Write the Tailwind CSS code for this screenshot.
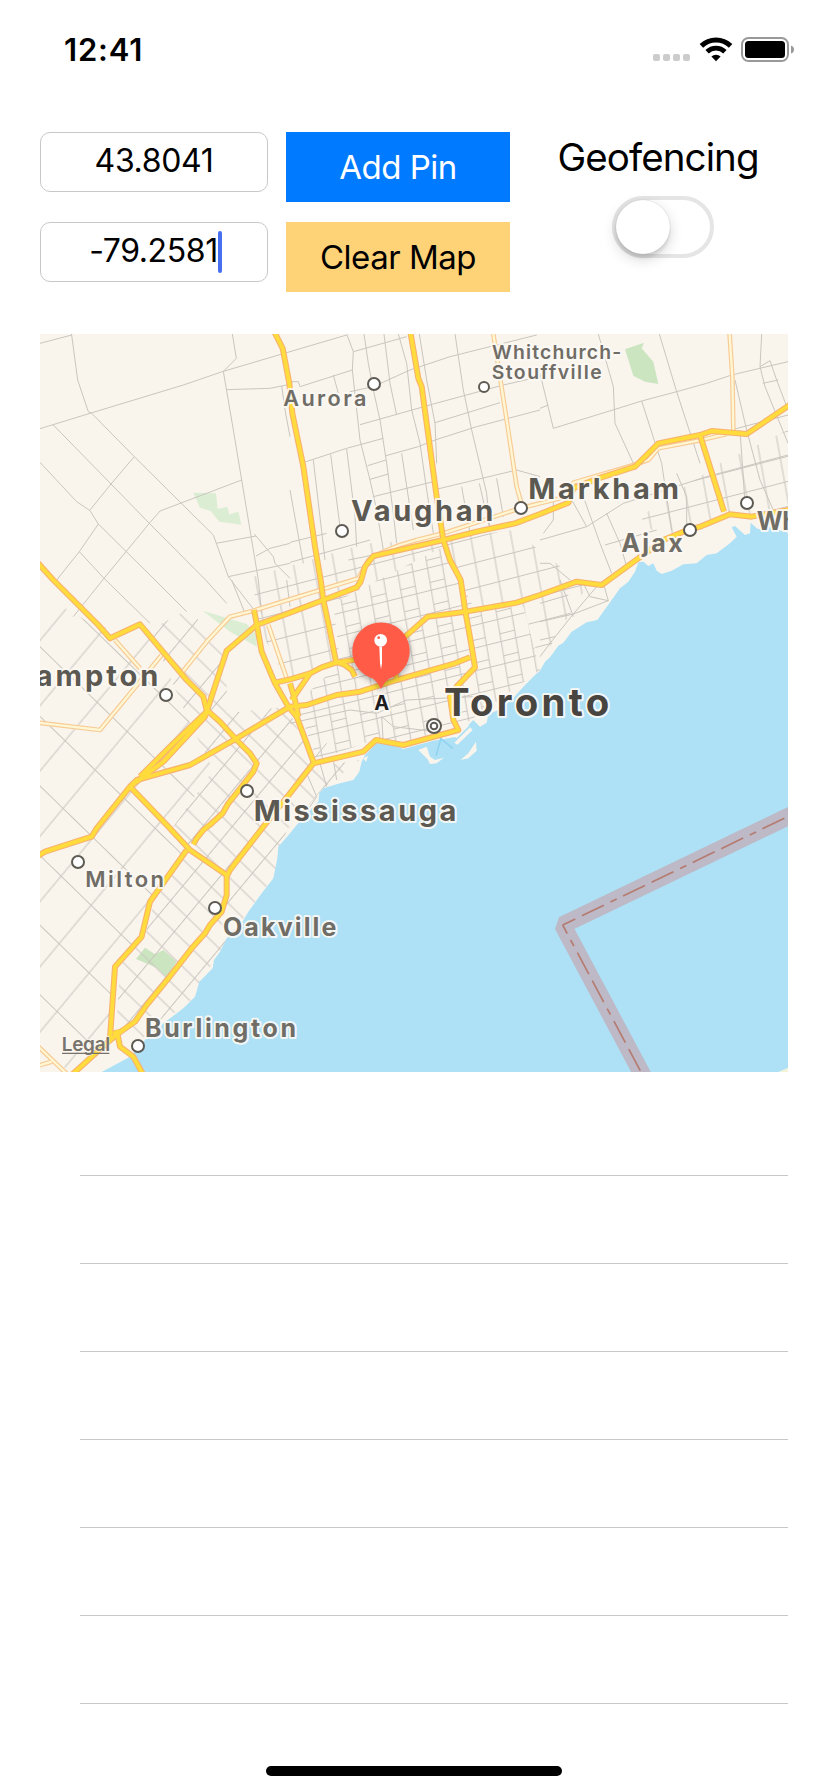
<!DOCTYPE html>
<html lang="en">
<head>
<meta charset="utf-8">
<title>Geofencing</title>
<script src="https://cdn.jsdelivr.net/npm/@tailwindcss/browser@4"></script>
</head>
<body class="bg-white">
<main class="flex h-[1792px] w-[828px] flex-col overflow-hidden bg-white font-['Inter','Liberation_Sans',sans-serif] text-black">
  <header class="flex h-[132px] items-start justify-between pt-[37px] pr-[34px] pl-[64px]">
    <span class="text-[31px] leading-[26px] font-semibold tracking-[0.8px]">12:41</span>
    <div class="flex h-[25px] items-start">
      <div class="mt-[17px] mr-[9px] flex gap-[3px]">
        <i class="h-[7px] w-[7px] rounded-[2px] bg-[#cccccc]"></i><i class="h-[7px] w-[7px] rounded-[2px] bg-[#cccccc]"></i><i class="h-[7px] w-[7px] rounded-[2px] bg-[#cccccc]"></i><i class="h-[7px] w-[7px] rounded-[2px] bg-[#cccccc]"></i>
      </div>
      <svg class="mr-[8px] h-[25px] w-[34px]" viewBox="0 0 34 25" fill="none" stroke="#000">
        <path d="M2.4 8.9A21 21 0 0 1 31.6 8.9" stroke-width="5"/>
        <path d="M8.1 14.8A12.8 12.8 0 0 1 25.9 14.8" stroke-width="4.8"/>
        <path d="M17 24.3L12.4 19.5A6.6 6.6 0 0 1 21.6 19.5Z" fill="#000" stroke="none"/>
      </svg>
      <svg class="h-[25px] w-[53px]" viewBox="0 0 53 25">
        <rect x="1" y="1" width="46" height="23" rx="6.5" fill="none" stroke="#999" stroke-width="2"/>
        <rect x="4" y="4" width="40" height="17" rx="3.5"/>
        <path d="M50 8.5q3 1 3 4t-3 4z" fill="#999"/>
      </svg>
    </div>
  </header>

  <section class="flex h-[202px] items-start pl-[40px]">
    <div class="flex w-[228px] flex-col gap-[30px]">
      <div class="flex h-[60px] items-center justify-center rounded-[10px] border border-[#c8c8c8] pb-[2px] text-[32px] tracking-[-0.35px]">43.8041</div>
      <div class="flex h-[60px] items-center justify-center rounded-[10px] border border-[#c8c8c8] pb-[1px] pl-[3px] text-[32px] tracking-[-0.4px]"><span class="-mt-[1px]">-79.2581</span><span class="h-[42px] w-[4px] rounded-full bg-[#476ff0]"></span></div>
    </div>
    <div class="ml-[18px] flex w-[224px] flex-col gap-[20px] text-[33px] tracking-[-0.5px]">
      <button class="h-[70px] bg-[#007aff] pt-[2px] text-white">Add Pin</button>
      <button class="h-[70px] bg-[#fed377] pt-[2px]">Clear Map</button>
    </div>
    <div class="ml-[34px] flex w-[228px] flex-col items-center">
      <span class="h-[48px] pt-[1px] text-[38.5px] leading-[48px] tracking-[-0.9px]">Geofencing</span>
      <div class="mt-[16px] ml-[10px] h-[62px] w-[102px] rounded-full border-4 border-[#e5e5e5] bg-white">
        <div class="h-[54px] w-[54px] rounded-full bg-white shadow-[0_5px_14px_rgba(0,0,0,0.17),0_4px_3px_rgba(0,0,0,0.08),0_0_1px_rgba(0,0,0,0.25)]"></div>
      </div>
    </div>
  </section>

  <section class="ml-[40px] h-[738px] w-[748px] shrink-0">
    <svg class="block h-[738px] w-[748px]" viewBox="0 12 2244 2214">
      <defs>
        <pattern id="city" width="88" height="66" patternUnits="userSpaceOnUse" patternTransform="matrix(1 -.25 .17 1 10 5)"><path d="M0 33H88M22 0V66M66 0V66M22 10H66" fill="none" stroke="#c9c6bf" stroke-width="3"/></pattern>
        <pattern id="suburb" width="58" height="72" patternUnits="userSpaceOnUse" patternTransform="matrix(1 -.26 .18 1 0 20)"><path d="M0 36H58M29 0V72" fill="none" stroke="#c9c6bf" stroke-width="3"/></pattern>
        <pattern id="west" width="68" height="58" patternUnits="userSpaceOnUse" patternTransform="matrix(.72 .7 -.64 .77 0 0)"><path d="M0 29H68M34 0V58" fill="none" stroke="#c9c6bf" stroke-width="3"/></pattern>
        <pattern id="rural" width="125" height="150" patternUnits="userSpaceOnUse" patternTransform="matrix(.72 .7 -.64 .77 20 30)"><path d="M0 75H125M60 0V150" fill="none" stroke="#c9c6bf" stroke-width="3"/></pattern>
        <g id="major">
          <path d="M700 0L728 55L748 160L757 250L790 410L825 650L842 750L850 810L865 880L888 995L915 1005L935 1020L945 1040"/>
          <path d="M1110 0L1135 145L1145 170L1190 500L1210 630L1230 690L1262 750L1277 850L1295 950L1305 1012L1250 1070L1230 1100L1240 1170L1255 1200L1090 1245L1008 1230L970 1265L820 1300L750 1390L670 1490L570 1620L560 1640L560 1695L545 1745L510 1785L495 1810L455 1855L385 1945L320 2025L285 2075L235 2110L205 2135L95 2235"/>
          <path d="M230 2100L240 2150L280 2180L310 2235M218 2110L245 2105"/>
          <path d="M2250 224L2120 312L2015 303L1980 315L1855 340L1785 410L1675 445L1600 475L1585 518L1500 552L1425 580L1310 605L1210 630L1000 678L975 710L962 755L950 772L850 810L750 848L650 885L560 962L500 1145L495 1160L370 1295L270 1370L170 1495L155 1520L15 1565L-10 1580"/>
          <path d="M500 1145L400 1240L300 1340"/>
          <path d="M2250 539L2135 560L2070 553L1980 590L1930 605L1870 630L1795 685L1685 765L1610 755L1500 795L1430 818L1277 845L1163 860L1090 925L1010 980L940 990L888 998L845 1012L810 1030L750 1048L705 1058"/>
          <path d="M1290 982L1245 1000L1070 1050L960 1085L890 1095L800 1125L750 1130L585 1228L450 1305L290 1350L270 1370"/>
          <path d="M1065 1020L1070 1050M810 1030L755 1110"/>
          <path d="M642 840L650 880L665 965L705 1060L745 1130L770 1160L800 1240L820 1295M750 1060L765 1110L775 1160"/>
          <path d="M-10 695L40 750L175 885L210 925L300 883L440 1050L490 1100L500 1140L540 1175L590 1230L630 1270L650 1300L640 1325L605 1370L565 1420L548 1450L515 1480L490 1500L470 1525L460 1543"/>
          <path d="M270 1370L385 1490L450 1560L560 1635"/>
          <path d="M440 1560L330 1715L305 1820L225 1910L210 2125"/>
          <path d="M1980 315L2052 545"/>
        </g>
        <g id="minor">
          <path d="M1358 0L1400 270L1430 470L1447 530"/>
          <path d="M2060 312L1975 332L1855 355L1825 390L1780 405L1600 458L1560 505L1500 520L1440 535L1210 610L1130 630L1080 645L1030 665L985 690L955 745L750 808L640 842L570 860L500 935L420 1035"/>
          <path d="M2068 0L2077 140L2080 300"/>
          <path d="M685 885L740 1045M225 930L300 1015M365 975L180 1200L-5 1178"/>
          <path d="M-5 2150L85 2236M-5 2207L35 2195"/>
        </g>
      </defs>

      <rect y="12" width="2244" height="2214" fill="#f9f5ed"/>
      <g fill="#dbedd2">
        <path d="M460 488L528 490L533 537L562 530L568 553L595 545L604 584L538 575L512 543L480 533Z"/>
        <path d="M488 842L620 882L650 915L650 950L570 905Z"/>
      </g>
      <g fill="#cbe5c0">
        <path d="M1755 58L1812 38L1805 55L1840 95L1855 162L1815 155L1780 137Z"/>
        <path d="M315 1853L345 1873L370 1860L410 1895L380 1943L350 1913L288 1887Z"/>
      </g>

      <g stroke="none">
        <path fill="url(#city)" d="M880 820L1210 650L1300 830L1450 830L1500 1020L1250 1200L1090 1245L1000 1230L830 1290L770 1120L900 1000Z"/>
        <path fill="url(#suburb)" d="M640 740L980 640L1200 630L1420 600L1640 770L1500 1000L1450 830L1300 830L1210 650L880 820L900 1000L740 1050L650 880Z"/>
        <path fill="url(#suburb)" d="M1800 560L2040 400L2244 300L2244 540L2060 560L1870 640Z"/>
        <path fill="url(#west)" d="M440 840L560 940L560 1150L740 1130L830 1310L960 1290L850 1375L740 1500L700 1640L520 1890L465 2000L300 2130L230 2080L240 1910L320 1800L345 1700L450 1560L400 1490L520 1320L450 1180L330 900Z"/>
        <path fill="url(#rural)" d="M0 790L170 890L330 900L450 1180L520 1320L400 1490L450 1560L330 1715L305 1820L225 1910L210 2125L90 2226L0 2150Z"/>
      </g>

      <g fill="none" stroke="#c9c6bf" stroke-width="3">
        <path d="M0 40L95 15M90 0L95 15L113 150L145 245L155 250M0 296L150 250L430 165L550 124L750 65M577 12L589 85L550 124L580 300L605 450L655 750M560 179L690 175L725 168L750 163M725 168L735 240L750 320"/>
        <path d="M155 250L283 380L422 518L520 615L565 740L650 850M40 285L213 462L328 580L497 750L560 820M283 380L213 462L150 540M0 397L110 515L150 542L175 582L345 750L440 845M175 582L118 665L50 750M118 665L192 745L258 665L328 580L360 543L605 450M192 745L100 860M192 745L330 880"/>
        <path d="M528 640L648 618M643 612L700 680L705 700L750 745M648 678L690 655L750 640M565 740L750 700M575 750L615 850M655 750L665 850M740 750L750 830"/>
        <path d="M750 65L920 15M920 12L940 65L937 120L960 330L990 450L1010 540L1030 660M940 65L1100 20M750 155L775 155L780 170L937 120M880 135L895 190M972 12L985 100L1000 180L1020 270L1040 400L1060 550L1070 640M1032 12L1050 160L1070 255M1075 12L1100 100L1115 240L1140 340L1160 480L1180 610M1138 12L1160 150L1185 280L1190 400"/>
        <path d="M930 185L1000 170L1110 120L1230 80L1490 15M1245 12L1270 180L1295 300L1340 490L1350 600M960 284L1180 222L1390 165L1500 140M1185 278L1380 218M1185 330L1310 290L1500 240M792 397L920 355L1030 325M1038 377L1135 350L1185 330M820 390L855 690M872 373L900 590M920 357L945 560L950 650M1085 370L1120 600M983 407L1038 390M990 448L1045 432M1000 500L1180 455M1180 480L1430 420L1500 440M1265 470L1290 610M1318 460L1350 600M1370 445L1390 560M750 637L860 610M750 697L990 630M750 480L790 700M925 690L1000 675"/>
        <path d="M1675 12L1720 170L1725 280L1780 400M1500 130L1540 295L1725 238L1805 213L1910 185L2000 160L2075 135L2244 95M1858 12L1910 185L1980 400M1805 213L1865 400L1895 600M1500 235L1525 225M2165 12L2160 110L2175 170L2244 340M2160 110L2190 92L2210 150L2244 240M2168 160L2215 150M2085 150L2120 300L2160 450L2200 540M2080 298L2244 255M2100 300L2115 520M1500 630L1640 590L1750 520L2000 440L2244 375M1640 590L1590 500M1700 550L1740 640L1760 710M1540 500L1540 570L1510 610M1500 700L1530 700L1590 750M1630 500L1680 640L1715 730M1695 645L1850 600M1910 430L1940 500L1940 600"/>
        <path d="M1560 750L1600 860M1630 760L1650 800L1705 812M1690 760L1705 812L1600 852L1500 875M1670 770L1600 852L1530 940L1500 980M1500 820L1585 795M1500 930L1545 920"/>
        <path d="M750 1180L930 1140L1010 1150L1100 1110L1300 1100M1030 1240L1025 1160L1060 1190L1230 1210M770 1350L860 1240M800 1330L830 1400L790 1460M880 1290L890 1350M840 1300L860 1370"/>
      </g>

      <path fill="#aee1f6" d="M2244 608L2215 600L2190 590L2165 600L2150 595L2132 578L2130 610L2115 615L2085 588L2075 592L2090 620L2070 640L2030 670L2000 675L1970 700L1930 703L1895 722L1865 732L1850 722L1840 700L1825 708L1810 695L1795 697L1785 725L1765 755L1740 775L1715 810L1672 870L1640 877L1595 905L1570 938L1555 947L1530 982L1515 995L1500 1022L1485 1035L1450 1070L1415 1110L1370 1142L1345 1152L1340 1178L1320 1190L1300 1170L1250 1220L1180 1232L1090 1257L1055 1243L1010 1240L990 1260L975 1275L965 1295L958 1325L940 1350L900 1360L850 1375L838 1390L835 1415L810 1440L770 1485L750 1510L715 1550L712 1585L700 1645L665 1690L625 1745L590 1805L560 1825L540 1865L522 1890L518 1915L478 1955L465 2000L430 2035L370 2080L315 2130L270 2180L185 2226H2244Z"/>
      <g fill="#f9f5ed">
        <path d="M1135 1260L1160 1250L1170 1280L1185 1290L1212 1283L1190 1300L1170 1302L1163 1288Z"/>
        <path d="M1243 1238L1290 1192L1298 1200L1252 1244ZM1238 1218L1280 1188L1290 1184L1250 1224ZM1262 1290L1285 1270L1308 1235L1310 1262L1285 1285ZM970 1285L984 1277L978 1296Z"/>
      </g>
      <path d="M1202 1228L1188 1278M1202 1225L1238 1255M1202 1215V1230" fill="none" stroke="#91d3f0" stroke-width="5"/>

      <path d="M2264 1450L1568 1785L1813 2245" fill="none" stroke="#bdb9c6" stroke-width="52" stroke-linejoin="bevel"/>
      <path d="M1568 1785L2264 1450" fill="none" stroke="#b57b70" stroke-width="5" stroke-dasharray="73 22 73 22 21 21" stroke-dashoffset="31"/>
      <path d="M1568 1785L1813 2245" fill="none" stroke="#b57b70" stroke-width="5" stroke-dasharray="73 22 21 22 73 22" stroke-dashoffset="44"/>
      <path d="M2215 2226L2244 2213V2226Z" fill="#f1f3da"/>

      <g fill="none" stroke-linejoin="round">
        <use href="#minor" stroke="#f8ca94" stroke-width="14"/>
        <use href="#minor" stroke="#fff6d3" stroke-width="7"/>
        <use href="#major" stroke="#f8b26e" stroke-width="18"/>
        <use href="#major" stroke="#ffdc3c" stroke-width="11.5"/>
      </g>

      <g fill="#fff" stroke="#5c5a53" stroke-width="6">
        <circle cx="1002" cy="162" r="18"/><circle cx="1332" cy="171" r="15"/><circle cx="906" cy="603" r="18"/>
        <circle cx="1443" cy="534" r="18"/><circle cx="1950" cy="600" r="18"/><circle cx="2121" cy="519" r="18"/>
        <circle cx="378" cy="1095" r="18"/><circle cx="621" cy="1383" r="18"/><circle cx="114" cy="1596" r="18"/>
        <circle cx="525" cy="1734" r="18"/><circle cx="294" cy="2148" r="18"/>
        <circle cx="1182" cy="1188" r="21"/><circle cx="1182" cy="1188" r="10"/>
      </g>

      <g stroke="#fcf9f4" stroke-opacity=".9" stroke-width="12" stroke-linejoin="round" paint-order="stroke" font-weight="700" fill="#5b5951" font-size="87">
        <text x="933" y="574" textLength="427">Vaughan</text>
        <text x="1465" y="506" textLength="452">Markham</text>
        <text x="-122" y="1067" textLength="477">Brampton</text>
        <text x="641" y="1474" textLength="608">Mississauga</text>
        <text x="1212" y="1158" textLength="496" font-size="115" fill="#48443f">Toronto</text>
        <g fill="#706c66" font-size="75">
          <text x="1744" y="667" textLength="184">Ajax</text>
          <text x="2150" y="599" textLength="260">Whitby</text>
          <text x="549" y="1817" textLength="340">Oakville</text>
          <text x="315" y="2120" textLength="453">Burlington</text>
        </g>
        <g fill="#706c66" font-weight="600">
          <text x="730" y="228" textLength="249" font-size="65">Aurora</text>
          <text x="136" y="1672" textLength="236" font-size="66">Milton</text>
          <text x="1356" y="87" textLength="388" font-size="58">Whitchurch-</text>
          <text x="1355" y="147" textLength="330" font-size="58">Stouffville</text>
        </g>
        <g fill="#77736c" font-weight="600" stroke-width="4">
          <text x="65" y="2163" textLength="146" font-size="57">Legal</text>
          <path d="M66 2170H208" stroke="#77736c" stroke-opacity="1"/>
        </g>
        <text x="1003" y="1139" font-size="60" fill="#1d1d1f">A</text>
      </g>

      <path class="drop-shadow-[0_6px_10px_rgba(0,0,0,0.35)]" fill="#ff5b47" d="M1023 1077Q1015 1058 1000 1046A86 86 0 1 1 1046 1046Q1031 1058 1023 1077Z"/>
      <circle cx="1022" cy="931" r="19" fill="#fff"/>
      <circle cx="1016" cy="923" r="4" fill="#ff5b47"/>
      <path d="M1018 950H1026V1000L1023 1018L1020 1000Z" fill="#fff"/>
    </svg>
  </section>

  <section class="flex flex-col pt-[16px] pr-[40px] pl-[80px]">
    <div class="h-[88px] border-b border-[#c8c8c8]"></div>
    <div class="h-[88px] border-b border-[#c8c8c8]"></div>
    <div class="h-[88px] border-b border-[#c8c8c8]"></div>
    <div class="h-[88px] border-b border-[#c8c8c8]"></div>
    <div class="h-[88px] border-b border-[#c8c8c8]"></div>
    <div class="h-[88px] border-b border-[#c8c8c8]"></div>
    <div class="h-[88px] border-b border-[#c8c8c8]"></div>
  </section>
  <div class="mt-[62px] h-[10px] w-[296px] shrink-0 self-center rounded-full bg-black"></div>
</main>
</body>
</html>
